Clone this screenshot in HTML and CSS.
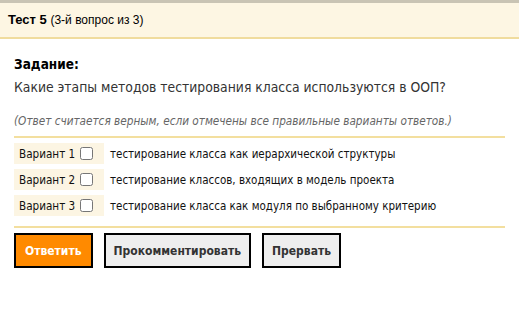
FILE: index.html
```html
<!DOCTYPE html>
<html lang="ru">
<head>
  <meta charset="UTF-8" />
  <title>Тест 5</title>
  <link rel="stylesheet" href="styles.css">
</head>
<body>

  <div class="test-head">
    <b>Тест 5</b> <span class="count">(3-й вопрос из 3)</span>
  </div>

  <div class="task">
    <div class="task-title">Задание:</div>
    <div class="task-text">Какие этапы методов тестирования класса используются в ООП?</div>
    <div class="task-note">(Ответ считается верным, если отмечены все правильные варианты ответов.)</div>
  </div>

  <table class="answers">
    <tr>
      <td class="variant">Вариант 1 <input type="checkbox"></td>
      <td class="answer">тестирование класса как иерархической структуры</td>
    </tr>
    <tr>
      <td class="variant">Вариант 2 <input type="checkbox"></td>
      <td class="answer">тестирование классов, входящих в модель проекта</td>
    </tr>
    <tr>
      <td class="variant">Вариант 3 <input type="checkbox"></td>
      <td class="answer">тестирование класса как модуля по выбранному критерию</td>
    </tr>
  </table>

  <div class="buttons">
    <button class="btn btn-answer">Ответить</button>
    <button class="btn">Прокомментировать</button>
    <button class="btn">Прервать</button>
  </div>

</body>
</html>
```

FILE: styles.css
```css
* {
  box-sizing: border-box;
}

body {
  margin: 0;
  background: #fff;
  color: #222;
  font-family: "DejaVu Sans Condensed", "DejaVu Sans", sans-serif;
  font-size: 12px;
}

.test-head {
  border-top: 3px solid #c9c4b4;
  border-bottom: 2px solid #f0dc9e;
  background: #fdf6e3;
  padding: 9px 8px 10px;
  font-family: "Liberation Sans", Arial, sans-serif;
  font-size: 13px;
  color: #000;
}

.test-head .count {
  font-size: 12px;
}

.task {
  margin: 0 14px;
  padding-top: 17px;
  padding-bottom: 8px;
  border-bottom: 2px solid #f3df9f;
}

.task-title {
  font-weight: bold;
  font-size: 13.5px;
  color: #000;
}

.task-text {
  margin-top: 7px;
  font-size: 13.8px;
  color: #333;
}

.task-note {
  margin-top: 19px;
  font-style: italic;
  font-size: 11.7px;
  color: #666;
}

.answers {
  margin: 0 14px;
  border-collapse: separate;
  border-spacing: 0 5px;
  width: calc(100% - 28px);
  border-bottom: 2px solid #f3df9f;
  padding-bottom: 5px;
}

.answers td {
  padding: 0 4px 0 5px;
  height: 21px;
  vertical-align: middle;
}

.variant {
  background: #fcf5e3;
  width: 90px;
  white-space: nowrap;
  color: #111;
  font-size: 11.6px;
}

.variant input {
  margin: 0 0 0 1px;
  width: 13px;
  height: 13px;
  vertical-align: -2px;
}

.answer {
  padding-left: 6px !important;
  color: #111;
  font-size: 11.5px;
}

.buttons {
  display: flex;
  gap: 11px;
  padding: 5px 14px;
}

.btn {
  font-family: "DejaVu Sans Condensed", "DejaVu Sans", sans-serif;
  font-weight: bold;
  font-size: 12px;
  color: #333;
  background: #eee;
  border: 2px solid #000;
  height: 35px;
  padding: 0 8px;
}

.btn-answer {
  background: #ff8a00;
  color: #fff;
  padding: 0 9px;
}
```
